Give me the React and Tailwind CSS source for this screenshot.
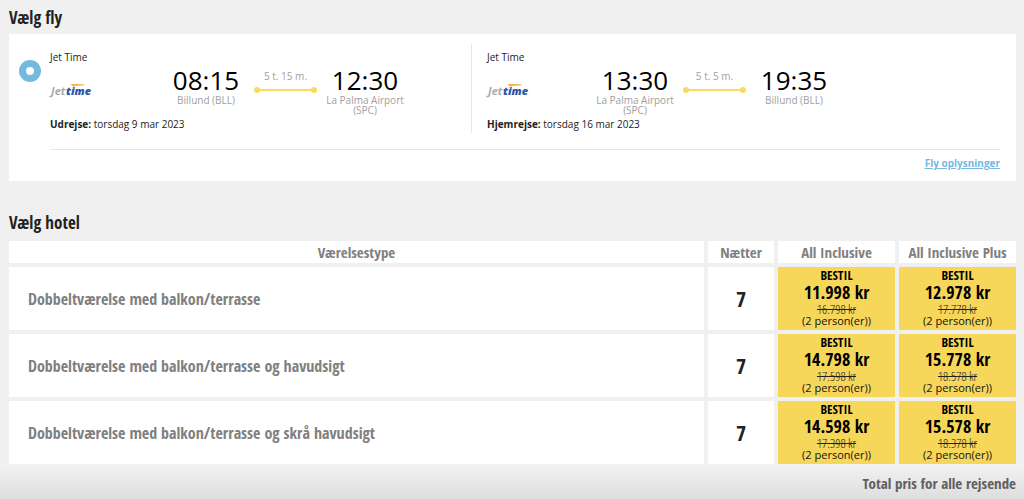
import React, { useState } from 'react';

const flights = [
  {
    id: 'out',
    airline: 'Jet Time',
    label: 'Udrejse:',
    date: 'torsdag 9 mar 2023',
    duration: '5 t. 15 m.',
    from: { time: '08:15', airport: 'Billund (BLL)' },
    to: { time: '12:30', airport: 'La Palma Airport (SPC)' },
  },
  {
    id: 'home',
    airline: 'Jet Time',
    label: 'Hjemrejse:',
    date: 'torsdag 16 mar 2023',
    duration: '5 t. 5 m.',
    from: { time: '13:30', airport: 'La Palma Airport (SPC)' },
    to: { time: '19:35', airport: 'Billund (BLL)' },
  },
];

const rooms = [
  {
    name: 'Dobbeltværelse med balkon/terrasse',
    nights: 7,
    offers: [
      { price: '11.998 kr', before: '16.798 kr' },
      { price: '12.978 kr', before: '17.778 kr' },
    ],
  },
  {
    name: 'Dobbeltværelse med balkon/terrasse og havudsigt',
    nights: 7,
    offers: [
      { price: '14.798 kr', before: '17.598 kr' },
      { price: '15.778 kr', before: '18.578 kr' },
    ],
  },
  {
    name: 'Dobbeltværelse med balkon/terrasse og skrå havudsigt',
    nights: 7,
    offers: [
      { price: '14.598 kr', before: '17.398 kr' },
      { price: '15.578 kr', before: '18.378 kr' },
    ],
  },
];

const condensed = "font-['Open_Sans_Condensed','Noto_Sans_Condensed','Liberation_Sans_Narrow',sans-serif]";
const condensedLight = "font-['Open_Sans_Condensed_Light','Open_Sans_Light_Condensed','Open_Sans_Condensed','Liberation_Sans_Narrow',sans-serif]";

function JetTimeLogo() {
  return (
    <svg width="42" height="40" viewBox="0 0 42 40" className="overflow-visible" role="img" aria-label="Jet Time">
      <defs>
        <linearGradient id="swoosh" x1="0" x2="1">
          <stop offset="0" stopColor="#f3b04a" />
          <stop offset="0.6" stopColor="#efa63a" />
          <stop offset="1" stopColor="#f8cf8c" />
        </linearGradient>
      </defs>
      <path d="M20.5 13 L35 13.2 L33.5 14.8 Q27 14.2 23 15.6Z" fill="url(#swoosh)" />
      <g fontFamily="Open Sans, sans-serif" fontStyle="italic">
        <text x="1" y="24" fontWeight="700" fontSize="11" fill="#a9aaad">Jet</text>
        <text x="16" y="24" fontWeight="800" fontSize="11" fill="#2c569f">time</text>
      </g>
    </svg>
  );
}

function Stop({ stop }) {
  return (
    <div className="w-[84px] text-center">
      <p className="text-[26px] leading-[30px] text-black">{stop.time}</p>
      <p className="text-[10px] leading-[10px] text-[#a0a0a0]">{stop.airport}</p>
    </div>
  );
}

function Flight({ flight }) {
  const home = flight.id === 'home';
  return (
    <div className={home ? 'flex-1 border-l border-[#e6e6e6] pl-[15px]' : 'w-[421px] shrink-0'}>
      <p className="pt-[5px] text-[10px] leading-4">{flight.airline}</p>
      <div className="flex h-[51px]">
        <div className={home ? 'w-[106px] pt-1.5' : 'w-[114px] pt-1.5'}>
          <JetTimeLogo />
        </div>
        <Stop stop={flight.from} />
        <div className="w-[75px] px-1.5 pt-[3px] text-center">
          <p className="text-[10px] leading-4 text-[#a0a0a0]">{flight.duration}</p>
          <div className="mt-[3px] flex items-center">
            <span className="size-1.5 rounded-full bg-[#fadb5f]" />
            <span className="h-0.5 flex-1 bg-[#fadb5f]" />
            <span className="size-1.5 rounded-full bg-[#fadb5f]" />
          </div>
        </div>
        <Stop stop={flight.to} />
      </div>
      <p className="pb-px text-[10px] leading-4">
        <strong>{flight.label}</strong> {flight.date}
      </p>
    </div>
  );
}

function OfferButton({ offer }) {
  return (
    <button
      type="button"
      className="block w-full cursor-pointer bg-[#f7d75a] pt-0.5 pb-[3px] text-center text-black hover:bg-[#fadb5f]"
    >
      <span className={`${condensed} block text-[13px] leading-[13px] font-bold`}>BESTIL</span>
      <span className={`${condensed} block text-[18px] leading-[21px] font-bold`}>{offer.price}</span>
      <s className={`${condensedLight} block text-[13px] leading-3 font-light text-[#222]`}>{offer.before}</s>
      <span className="block text-[11px] leading-3 text-[#111]">(2 person(er))</span>
    </button>
  );
}

function App() {
  const [selected, setSelected] = useState('jettime');

  return (
    <div className="flex min-h-screen flex-col bg-[#f0f0f0] font-['Open_Sans',sans-serif] text-[#222]">
      <section className="pr-2 pl-[9px]">
        <h2 className={`${condensed} pt-[7px] pb-[5px] text-[17px] leading-[22px] font-bold`}>Vælg fly</h2>
        <div className="flex bg-white pt-2.5 pr-4 pb-2.5 pl-2.5">
          <input
            type="radio"
            name="flight"
            aria-label="Jet Time"
            checked={selected === 'jettime'}
            onChange={() => setSelected('jettime')}
            className="mt-4 mr-[9px] size-[22px] shrink-0 appearance-none rounded-full border-[7px] border-[#74b9e0] bg-white"
          />
          <div className="flex-1">
            <div className="flex">
              {flights.map((flight) => (
                <Flight key={flight.id} flight={flight} />
              ))}
            </div>
            <div className="mt-4 border-t border-[#e6e6e6] pt-[5px] text-right text-[10px] leading-4">
              <a href="#fly" className="font-bold text-[#74b9e0] underline">
                Fly oplysninger
              </a>
            </div>
          </div>
        </div>
      </section>

      <section className="pr-1 pl-[5px]">
        <h2 className={`${condensed} px-1 pt-[31px] pb-[3px] text-[17px] leading-[22px] font-bold`}>Vælg hotel</h2>
        <table className="w-full table-fixed border-separate border-spacing-1">
          <thead className={`${condensed} text-[15px] leading-[22px] text-[#808080]`}>
            <tr>
              <th className="bg-white p-0">Værelsestype</th>
              <th className="w-[66px] bg-white p-0">Nætter</th>
              <th className="w-[117px] bg-white p-0">All Inclusive</th>
              <th className="w-[117px] bg-white p-0">All Inclusive Plus</th>
            </tr>
          </thead>
          <tbody>
            {rooms.map((room) => (
              <tr key={room.name}>
                <th className={`${condensed} bg-white py-0 pr-4 pl-[19px] text-left text-[16px] font-bold text-[#808080]`}>
                  {room.name}
                </th>
                <td className={`${condensed} bg-white p-0 text-center text-[22px] font-bold`}>{room.nights}</td>
                {room.offers.map((offer) => (
                  <td key={offer.price} className="p-0">
                    <OfferButton offer={offer} />
                  </td>
                ))}
              </tr>
            ))}
          </tbody>
        </table>
      </section>

      <footer className="flex-1 bg-linear-to-b from-[#f0f0f0] to-[#dddddd] pt-1 pr-2 pb-1.5">
        <p className={`${condensed} text-right text-[15px] leading-[22px] font-bold text-[#606060]`}>
          Total pris for alle rejsende
        </p>
      </footer>
    </div>
  );
}

export default App;
